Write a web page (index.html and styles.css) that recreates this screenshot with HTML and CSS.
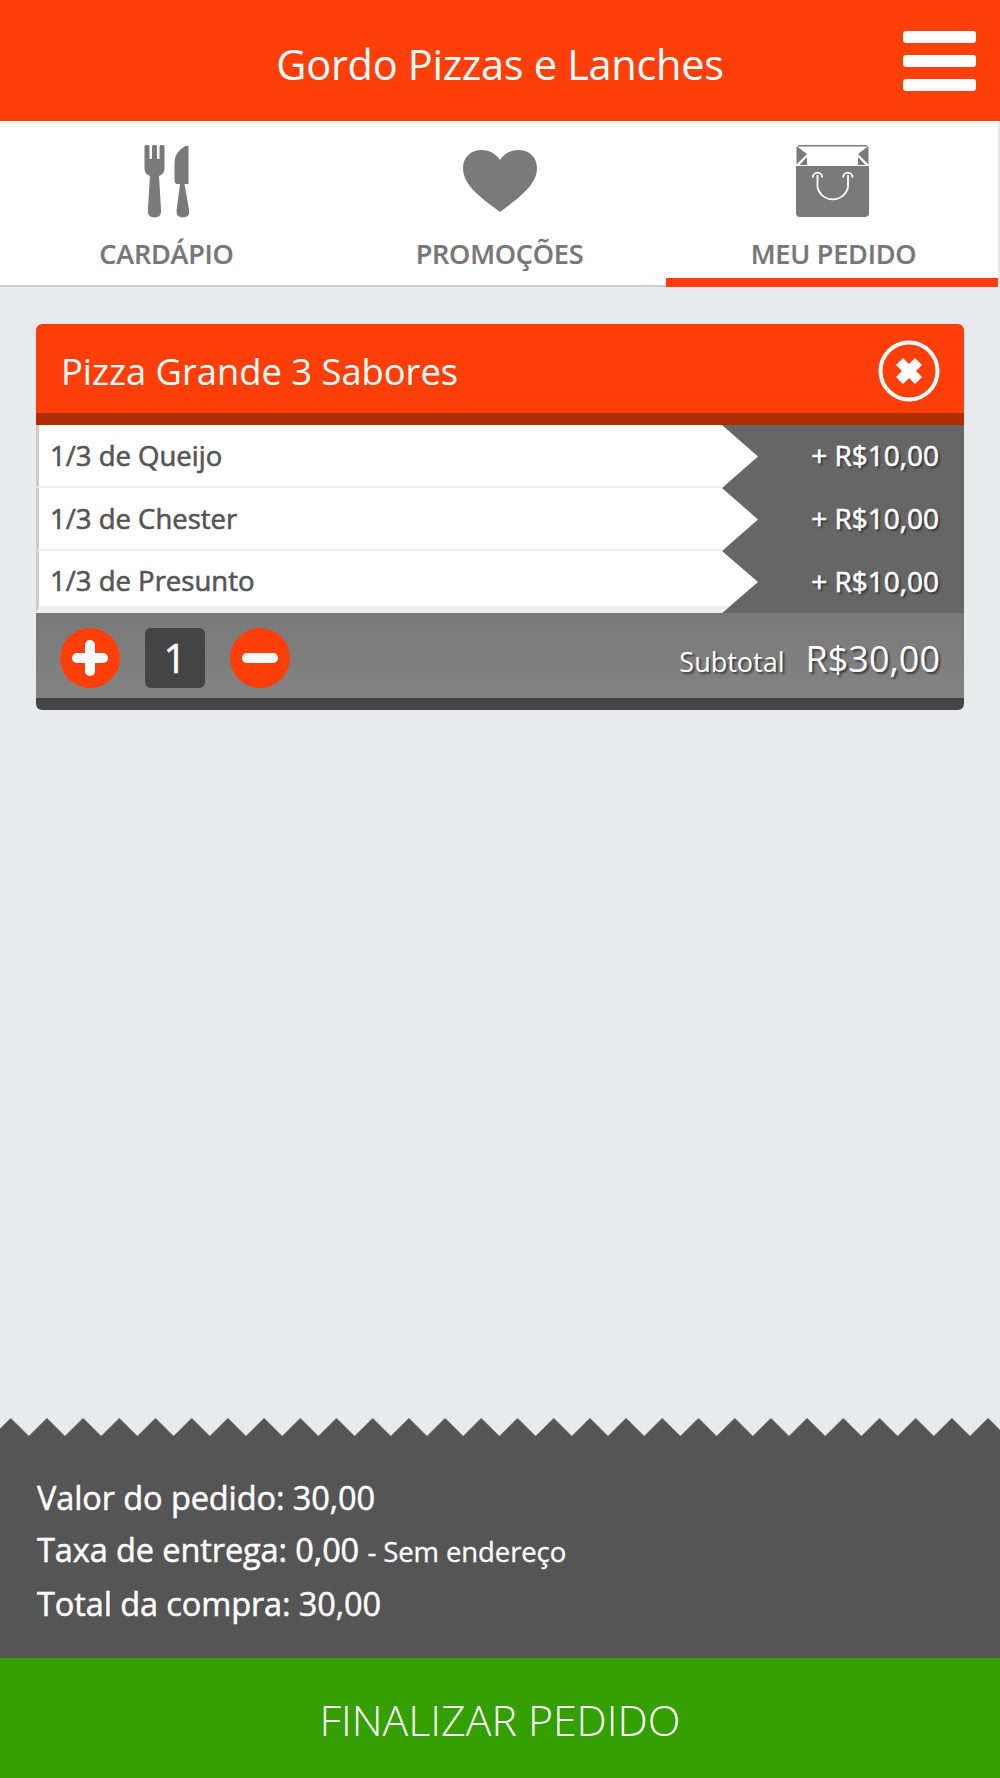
FILE: index.html
```html
<!DOCTYPE html>
<html lang="pt-BR">
<head>
    <meta charset="UTF-8">
    <meta name="viewport" content="width=device-width, initial-scale=1.0">
    <title>Gordo Pizzas e Lanches</title>
    <link rel="stylesheet" href="styles.css">
</head>
<body>
    <div class="app">
        <header class="topbar">
            <span></span>
            <h1 class="topbar-title">Gordo Pizzas e Lanches</h1>
            <div class="menu-btn"><i></i><i></i><i></i></div>
        </header>

        <nav class="tabs">
            <div class="tab">
                <svg class="tab-icon" width="50" height="74" viewBox="-1.500 0 50 74">
                    <path d="M1 1.500Q1 0 2.500 0H5Q6 0 6 1.500V14H8.500V1.500Q8.500 0 10 0H12Q13.500 0 13.500 1.500V14H16V1.500Q16 0 17.500 0H19.500Q21 0 21 1.500V24Q21 29 15.500 31L17.600 66Q17.600 72.500 11 72.500Q4.300 72.500 4.300 66L6.500 31Q1 29 1 24Z"/>
                    <path d="M45 1V39H41L45.800 66Q45.800 72.500 39.500 72.500Q33 72.500 33 66L36.500 39H33Q31 38 31 35V17Q31 7 42 1Z"/>
                </svg>
                <span class="tab-label">CARDÁPIO</span>
            </div>
            <div class="tab">
                <svg class="tab-icon" width="74" height="74" viewBox="0 -5 74 74">
                    <path d="M37 62C20 49 0 36 0 18C0 7 8 0 18.500 0C27 0 33 4 37 10C41 4 47 0 55.500 0C66 0 74 7 74 18C74 36 54 49 37 62Z"/>
                </svg>
                <span class="tab-label">PROMOÇÕES</span>
            </div>
            <div class="tab tab-active">
                <svg class="tab-icon" width="73" height="74" viewBox="0 0 73 74">
                    <path d="M2 0H71V1.500H2Z"/>
                    <path d="M0.500 1L11 9L0.500 19.500Z"/>
                    <path d="M3.500 20L11 12V20Z"/>
                    <path d="M72.500 1L62 9L72.500 19.500Z"/>
                    <path d="M69.500 20L62 12V20Z"/>
                    <path d="M0 21H73V68Q73 72 69 72H4Q0 72 0 68Z"/>
                    <path class="bag-handle" d="M16.800 32.400A4.700 4.700 0 0 1 26.200 32.400M21.500 30V42A15.500 15 0 0 0 52 42V30M47.100 32.400A4.700 4.700 0 0 1 56.500 32.400"/>
                </svg>
                <span class="tab-label">MEU PEDIDO</span>
            </div>
        </nav>

        <main class="content">
            <section class="card">
                <div class="card-head">
                    <h2 class="card-title">Pizza Grande 3 Sabores</h2>
                    <svg class="card-close" width="62" height="62" viewBox="0 0 62 62">
                        <circle cx="31" cy="31" r="28.500" fill="none" stroke="#fff" stroke-width="4"/>
                        <path d="M18 25L25 18L31 24L37 18L44 25L38 31L44 37L37 44L31 38L25 44L18 37L24 31Z" fill="#fff"/>
                    </svg>
                </div>
                <div class="item">
                    <div class="item-name">1/3 de Queijo</div>
                    <div class="item-price">+ R$10,00</div>
                </div>
                <div class="item">
                    <div class="item-name">1/3 de Chester</div>
                    <div class="item-price">+ R$10,00</div>
                </div>
                <div class="item item-last">
                    <div class="item-name">1/3 de Presunto</div>
                    <div class="item-price">+ R$10,00</div>
                </div>
                <div class="card-foot">
                    <div class="qty">
                        <svg class="qty-btn" width="60" height="60" viewBox="0 0 60 60">
                            <circle cx="30" cy="30" r="30" fill="#ff3f0a"/>
                            <path d="M30 17V43M17 30H43" stroke="#fff" stroke-width="10" stroke-linecap="round"/>
                        </svg>
                        <div class="qty-value">1</div>
                        <svg class="qty-btn" width="60" height="60" viewBox="0 0 60 60">
                            <circle cx="30" cy="30" r="30" fill="#ff3f0a"/>
                            <path d="M17 30H43" stroke="#fff" stroke-width="10" stroke-linecap="round"/>
                        </svg>
                    </div>
                    <div class="subtotal">
                        <span class="subtotal-label">Subtotal</span>
                        <span class="subtotal-value">R$30,00</span>
                    </div>
                </div>
            </section>
        </main>

        <svg class="zigzag" width="1000" height="18">
            <defs>
                <pattern id="teeth" width="36.2" height="18" patternUnits="userSpaceOnUse" x="10.700">
                    <path d="M0 0L18.100 18H-18.100ZM36.200 0L54.300 18H18.100Z" fill="#555"/>
                </pattern>
            </defs>
            <rect width="1000" height="18" fill="url(#teeth)"/>
        </svg>
        <section class="summary">
            <p>Valor do pedido: 30,00</p>
            <p>Taxa de entrega: 0,00 <small>- Sem endereço</small></p>
            <p>Total da compra: 30,00</p>
        </section>
        <button class="finish" type="button">FINALIZAR PEDIDO</button>
    </div>
</body>
</html>
```

FILE: styles.css
```css
* {
    box-sizing: border-box;
}
html, body {
    margin: 0;
    padding: 0;
}
body {
    font-family: "Open Sans", "Noto Sans", sans-serif;
    background-color: #e9eaee;
}
.app {
    display: flex;
    flex-direction: column;
    height: 1778px;
}

/* top bar */
.topbar {
    display: grid;
    grid-template-columns: 1fr auto 1fr;
    align-items: center;
    height: 121px;
    flex: none;
    background-color: #ff3f0a;
    color: #fff;
}
.topbar-title {
    margin: 0;
    padding-top: 6px;
    font-size: 41.500px;
    font-weight: 400;
    letter-spacing: -0.3px;
}
.menu-btn {
    justify-self: end;
    display: flex;
    flex-direction: column;
    gap: 12px;
    margin-right: 24px;
}
.menu-btn i {
    display: block;
    width: 73px;
    height: 12px;
    border-radius: 3px;
    background-color: #fff;
}

/* tabs */
.tabs {
    display: grid;
    grid-template-columns: 333px 333px 334px;
    height: 166px;
    flex: none;
}
.tab {
    display: flex;
    flex-direction: column;
    align-items: center;
    padding-top: 24px;
    background-color: #fff;
    border-bottom: 2px solid #ccced3;
}
.tab-active {
    margin-right: 2px;
    border-bottom: 9px solid #ff3f0a;
}
.tab-active .tab-label {
    margin-left: 3px;
}
.tab-icon {
    fill: #7a7a7a;
    flex: none;
}
.bag-handle {
    fill: none;
    stroke: #fff;
    stroke-width: 1.800;
}
.tab-label {
    margin-top: 18px;
    font-size: 27px;
    line-height: 34px;
    font-weight: 600;
    letter-spacing: -0.2px;
    color: #777;
    -webkit-text-stroke: 0.2px #777;
}

/* card */
.content {
    flex: 1;
    padding: 37px 36px 0;
}
.card {
    border-radius: 6px;
    overflow: hidden;
}
.card-head {
    display: flex;
    align-items: center;
    justify-content: space-between;
    height: 101px;
    padding: 4px 24px 0 25px;
    background-color: #ff3f0a;
    border-bottom: 12px solid #b02c05;
    color: #fff;
}
.card-title {
    margin: 0;
    font-size: 36.300px;
    font-weight: 400;
}
.item {
    display: flex;
    height: 63px;
    background-color: #666;
}
.item-last {
    height: 62px;
}
.item-name {
    width: 722px;
    flex: none;
    padding-left: 11px;
    border-left: 3px solid #ccc;
    border-bottom: 2px solid #eee;
    background-color: #fff;
    clip-path: polygon(0 0, 686px 0, 722px 50%, 686px 100%, 0 100%);
    font-size: 27.500px;
    line-height: 62px;
    color: #555;
    -webkit-text-stroke: 0.6px #555;
}
.item-last .item-name {
    border-bottom-width: 7px;
    line-height: 59px;
}
.item-price {
    flex: 1;
    padding-right: 25px;
    text-align: right;
    font-size: 28px;
    line-height: 61px;
    color: #fff;
    -webkit-text-stroke: 0.6px #fff;
    text-shadow: 2px 2px 2px rgba(0,0,0,0.5);
}
.card-foot {
    display: flex;
    align-items: center;
    justify-content: space-between;
    height: 97px;
    padding: 5px 24px 0 24px;
    background: linear-gradient(#797979, #838383);
    border-bottom: 12px solid #454545;
    color: #fff;
}
.qty {
    display: flex;
    align-items: center;
    gap: 25px;
}
.qty-value {
    width: 60px;
    height: 60px;
    border-radius: 6px;
    background-color: #444;
    text-align: center;
    font-size: 40px;
    line-height: 60px;
    -webkit-text-stroke: 0.5px #fff;
}
.subtotal {
    display: flex;
    align-items: baseline;
    gap: 21px;
    text-shadow: 2px 2px 2px rgba(0,0,0,0.5);
}
.subtotal-label {
    font-size: 27px;
}
.subtotal-value {
    font-size: 36px;
}

/* bottom */
.zigzag {
    display: block;
    flex: none;
}
.summary {
    height: 222px;
    flex: none;
    padding: 36px 37px 0;
    background-color: #555;
    color: #fff;
}
.summary p {
    margin: 0;
    font-size: 32.500px;
    line-height: 52px;
    letter-spacing: -0.1px;
    -webkit-text-stroke: 0.5px #fff;
}
.summary small {
    font-size: 27.500px;
    -webkit-text-stroke: 0.3px #fff;
}
.finish {
    display: block;
    width: 100%;
    height: 120px;
    flex: none;
    padding-top: 4px;
    border: none;
    background-color: #33a000;
    color: #fff;
    font-family: inherit;
    font-size: 42.800px;
    font-weight: 300;
}
```
